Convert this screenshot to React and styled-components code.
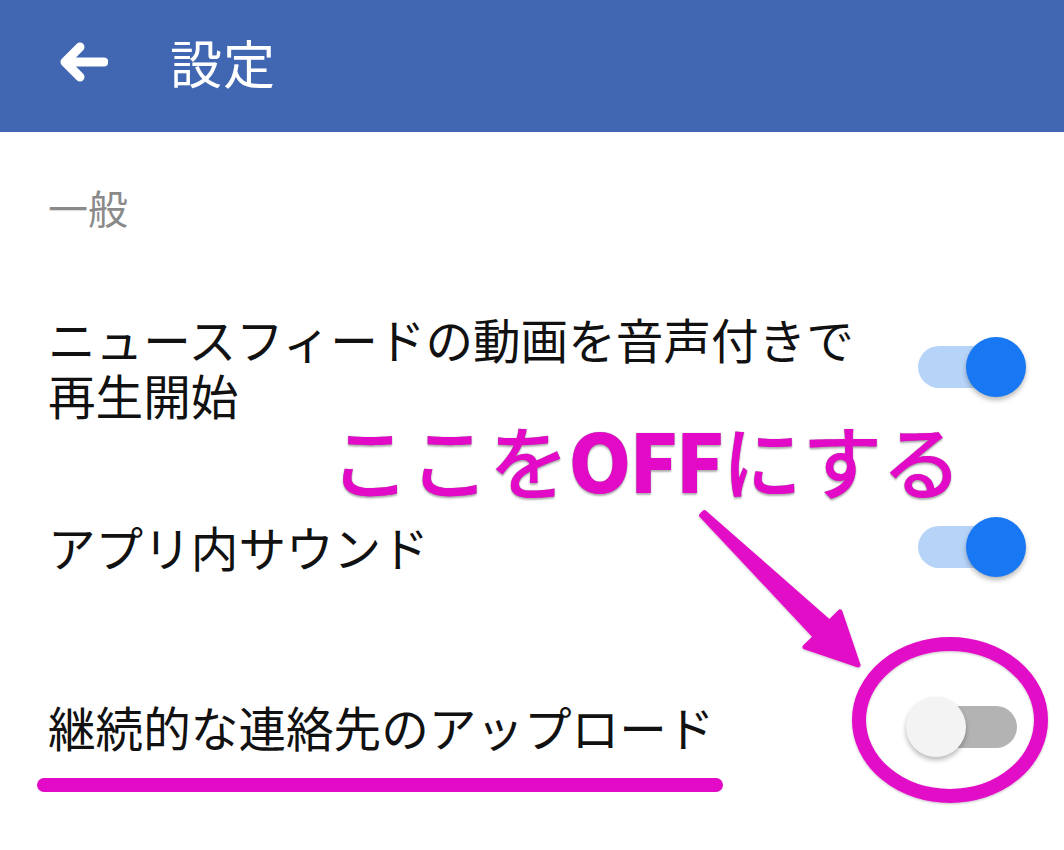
import styled, { createGlobalStyle } from "styled-components";

const GlobalStyle = createGlobalStyle`
  html, body {
    margin: 0;
    padding: 0;
    background: #ffffff;
  }
  body {
    font-family: "Noto Sans CJK JP", "Noto Sans", sans-serif;
  }
`;

const Page = styled.div`
  position: relative;
  width: 1064px;
  height: 850px;
  overflow: hidden;
  background: #ffffff;
`;

const Header = styled.header`
  display: flex;
  align-items: center;
  height: 132px;
  padding: 0 0 8px 58px;
  box-sizing: border-box;
  background: #4267b2;
  color: #ffffff;
`;

const BackButton = styled.button`
  display: flex;
  align-items: center;
  justify-content: center;
  padding: 0;
  border: 0;
  background: none;
  width: 50px;
  height: 40px;
  margin-right: 62px;
  color: #ffffff;
`;

const Title = styled.h1`
  margin: 0;
  font-size: 52px;
  font-weight: 400;
  line-height: 1;
  letter-spacing: 1px;
`;

const SectionLabel = styled.div`
  padding: 51px 48px 46px;
  font-size: 40px;
  line-height: 48px;
  color: #8a8a8a;
`;

const Row = styled.div`
  display: flex;
  align-items: center;
  gap: 40px;
  min-height: 180px;
  padding: 0 38px 0 48px;
  box-sizing: border-box;
`;

const Label = styled.div`
  flex: 1;
  font-size: 47.6px;
  line-height: 56px;
  color: #111111;
`;

const Switch = styled.div`
  position: relative;
  flex: none;
  width: 120px;
  height: 60px;
`;

const Track = styled.div`
  position: absolute;
  left: ${(p) => (p.$on ? "12px" : "9px")};
  right: 9px;
  top: 9px;
  height: 42px;
  border-radius: 21px;
  background: ${(p) => (p.$on ? "#b6d3f8" : "#b3b3b3")};
`;

const Thumb = styled.div`
  position: absolute;
  top: 0;
  left: ${(p) => (p.$on ? "60px" : "0")};
  width: 60px;
  height: 60px;
  border-radius: 50%;
  background: ${(p) => (p.$on ? "#1877f2" : "#f3f3f3")};
  box-shadow: 0 3px 5px rgba(0, 0, 0, 0.28);
`;

const Annotations = styled.svg`
  position: absolute;
  inset: 0;
  pointer-events: none;
`;

const Callout = styled.div`
  position: absolute;
  left: 330px;
  top: 426px;
  font-family: "Noto Sans CJK JP", sans-serif;
  font-size: 80px;
  font-weight: 500;
  line-height: 0.8;
  color: #e20ac6;
  white-space: nowrap;
  letter-spacing: -0.5px;
  -webkit-text-stroke: 14px #ffffff;
  paint-order: stroke fill;
  text-shadow: 0 0 1px #8c8c8c, 0 2px 2px rgba(0, 0, 0, 0.3);
`;

const Strong = styled.span`
  font-weight: 900;
  letter-spacing: -2px;
`;

function Toggle({ on }) {
  return (
    <Switch>
      <Track $on={on} />
      <Thumb $on={on} />
    </Switch>
  );
}

const settings = [
  { label: "ニュースフィードの動画を音声付きで再生開始", on: true },
  { label: "アプリ内サウンド", on: true },
  { label: "継続的な連絡先のアップロード", on: false },
];

export default function App() {
  return (
    <Page>
      <GlobalStyle />
      <Header>
        <BackButton aria-label="戻る">
          <svg width="50" height="40" viewBox="0 0 50 40">
            <path
              d="M46 20H7M22 5L7 20l15 15"
              fill="none"
              stroke="currentColor"
              strokeWidth="9"
              strokeLinecap="round"
              strokeLinejoin="round"
            />
          </svg>
        </BackButton>
        <Title>設定</Title>
      </Header>
      <SectionLabel>一般</SectionLabel>
      {settings.map((s) => (
        <Row key={s.label}>
          <Label>{s.label}</Label>
          <Toggle on={s.on} />
        </Row>
      ))}

      <Annotations width="1064" height="850" viewBox="0 0 1064 850">
        <defs>
          <filter id="soft" x="-10%" y="-10%" width="120%" height="120%">
            <feDropShadow dx="0" dy="1" stdDeviation="1" floodColor="#000" floodOpacity="0.25" />
          </filter>
        </defs>
        <line
          x1="44"
          y1="785"
          x2="716"
          y2="785"
          stroke="#e20ac6"
          strokeWidth="14"
          strokeLinecap="round"
        />
        <ellipse
          cx="950"
          cy="720"
          rx="91"
          ry="76"
          fill="none"
          stroke="#e20ac6"
          strokeWidth="14"
          filter="url(#soft)"
        />
        <polygon
          points="704.4,512.6 829.5,622.3 840,612 858,665 805,647 815.5,636.7 701.6,515.4"
          fill="#e20ac6"
          stroke="#e20ac6"
          strokeWidth="5"
          strokeLinejoin="round"
          filter="url(#soft)"
        />
      </Annotations>
      <Callout>
        ここを<Strong>OFF</Strong>にする
      </Callout>
    </Page>
  );
}
